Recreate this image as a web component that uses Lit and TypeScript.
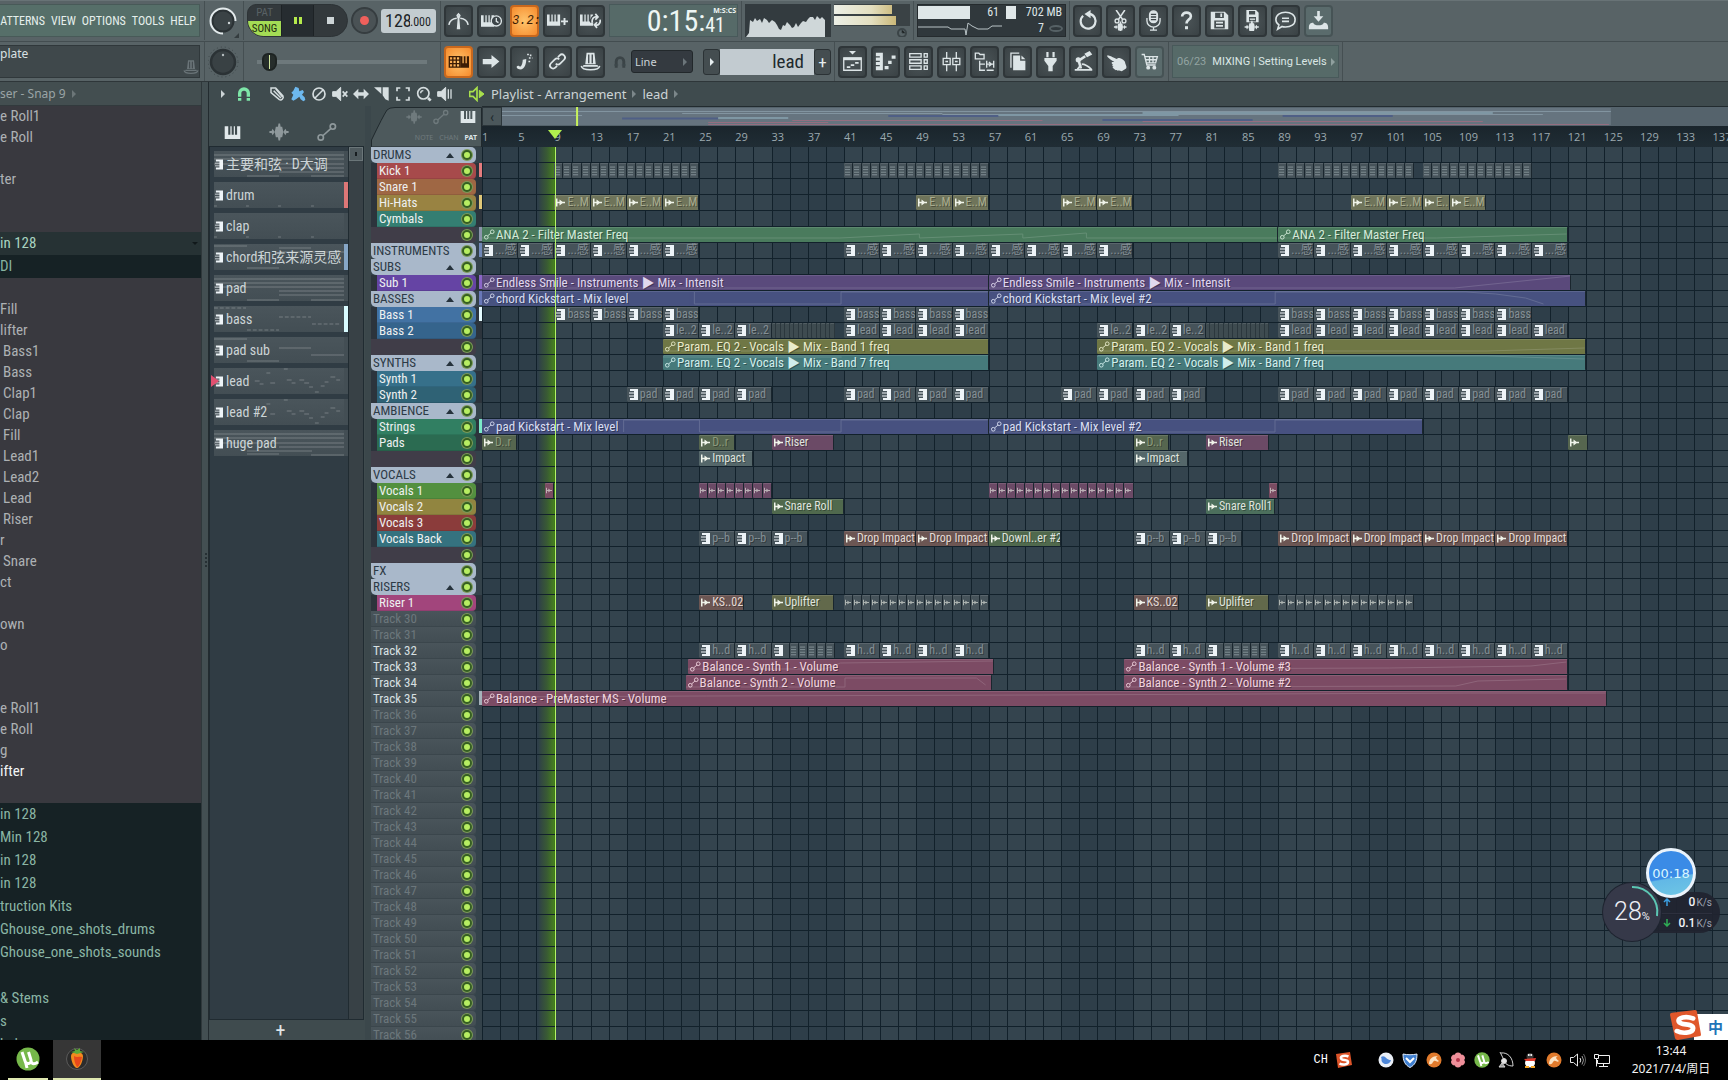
import { LitElement, html, svg, css, nothing } from "lit";
import { customElement, state } from "lit/decorators.js";
import { classMap } from "lit/directives/class-map.js";

const BARS = 137.7;
const pct = (bars: number) => `${(bars / BARS) * 100}%`;

/* ---------- icons, all on a 24 unit square ---------- */
const piano = (x = 0, y = 0) => svg`<path fill="currentColor" stroke="none" transform="translate(${x} ${y})" fill-rule="evenodd"
  d="M0 0h15v13H0zM3 0v8h2V0zM6.500 0v8h2V0zM10 0v8h2V0z"/>`;
const wave = (x: number, y: number, s = 1) => svg`<path fill="currentColor" stroke="none" transform="translate(${x} ${y}) scale(${s})"
  d="M0-1 2-1 3-3 5 0 6-5 8-5 8.500-8 10-8 10.500-5 12-5 13 0 15-3 16-1 18-1 18 1 16 1 15 3 13 0 12 5 10.500 5 10 8 8.500 8 8 5 6 5 5 0 3 3 2 1 0 1z"/>`;

const ICONS: Record<string, unknown> = {
  metro: svg`<path stroke-width="1.800" d="M1 17c1-5 4-7 9-7.500M23 17c-1-5-4-7-9-7.500"/><path fill="currentColor" stroke="none" d="M12 3l2.500 3-1.500 4 1 12h-4l1-12-1.500-4z"/><circle cx="12" cy="6.500" r="1" fill="#3d4549"/>`,
  wait: svg`${piano(0, 6)}<circle cx="17.500" cy="12.500" r="5.800" fill="#3d4549"/><path d="M17.500 9v4l2.500 1.500"/>`,
  keysplus: svg`${piano(0, 5)}<path stroke-width="2.200" d="M20 9v8M16 13h8"/>`,
  loop: svg`${piano(0, 5)}<path stroke="#3d4549" stroke-width="5" d="M14 14a4 5 0 0 1 5-6"/><path stroke-width="2" d="M14 14a4 5 0 0 1 5-6M23 11a4 5 0 0 1-5 6M17.500 4.500l3 3.500-3 3M19.500 14l-3 3 3 3.500"/>`,
  step: svg`<path d="M1.500 6.500h12v12h-12zM5.500 6.500v12M9.500 6.500v12M1.500 10.500h12M1.500 14.500h12"/><path fill="currentColor" stroke="none" d="M14 6h10v13H14zm2.500 0v8H18V6zm3.500 0v8h1.500V6z" fill-rule="evenodd"/>`,
  arrow: svg`<path fill="currentColor" stroke="none" d="M2 9h10V4.500l9 7.500-9 7.500V15H2z"/>`,
  glide: svg`<path fill="currentColor" stroke="none" d="M3 18c1-2 3-1 4 0 2-1 3-5 3-8l4-1c0 6-2 11-6 12-3 0-5-1-5-3z"/><path stroke-dasharray="2 1.500" stroke-width="1.800" d="M15 4h3M17 8h4M16.500 12h3M19 4v2"/>`,
  link: svg`<path stroke-width="2" d="M10 14.500a3.500 3.500 0 0 0 5 0l4.500-4.500a3.500 3.500 0 0 0-5-5l-2 2M14 9.500a3.500 3.500 0 0 0-5 0L4.500 14a3.500 3.500 0 0 0 5 5l2-2"/>`,
  stamp: svg`<path fill="currentColor" stroke="none" d="M7.500 2h9L18 15H6zM4 16h16l1 2H3z"/><path d="M10 4v10M14 4v10" stroke="#3d4549"/><path stroke-width="1.800" d="M1.500 17c1 6 20 6 21 0"/>`,
  magnet: svg`<path stroke-width="5" d="M5.500 22V11a6.500 6.500 0 0 1 13 0v11"/><path stroke="#3f4b4e" stroke-width="1.800" d="M2 17h7M15 17h7"/>`,
  playlist: svg`<path fill="currentColor" stroke="none" d="M8 0h8l-4 4z"/><path d="M2 8h20v14H2z"/><path stroke-width="3" d="M2 9h20"/><path stroke-width="2" d="M5.500 18.500h4M10 16h4M15 13.500h4"/>`,
  roll: svg`<path fill="currentColor" stroke="none" d="M1 2h8v20H1zm0 4v1.500h4.500V6zm0 5v1.500h4.500V11zm0 5v1.500h4.500V16z" fill-rule="evenodd"/><path stroke-width="3.500" d="M11 19h4.500M15 13h4M19 7h4.500"/>`,
  rack: svg`<path d="M2 3h13v4H2zM2 10h13v4H2zM2 17h13v4H2zM18.500 3H22v4h-3.500zM18.500 10H22v4h-3.500zM18.500 17H22v4h-3.500z"/>`,
  mixer: svg`<path d="M6.500 1v7.500M6.500 15.500V23M17.500 1v7.500M17.500 15.500V23M2.500 8.500h8v7h-8zM13.500 8.500h8v7h-8z"/><path d="M5 12h3M16 12h3"/>`,
  tree: svg`<path d="M1.500 2.500h4L7 4h4.500v5h-10zM6.500 11v11h6M6.500 15h6"/><path d="M14.500 11v8M22.500 11v8M14.500 15h8M14.500 22h8M17 12.500l3 2.500-3 2.500"/>`,
  files: svg`<path d="M4.500 19V2.500H14"/><path fill="currentColor" stroke="none" d="M7 5h8v6h6v11H7zM16.500 5l4.500 4.500h-4.500z"/>`,
  plug: svg`<path stroke-width="2.500" d="M8.500 1v6M15.500 1v6"/><path fill="currentColor" stroke="none" d="M5 8h14v3l-4.500 6v6h-5v-6L5 11z"/>`,
  bump: svg`<path fill="currentColor" stroke="none" d="M13 3l6-3 3 4-6 3z"/><path stroke-width="3" d="M14 6L6.500 11 9 20"/><path stroke-width="2" d="M2 21.500h20M10 15c4 0 8 3 11 6M5 21l4-5"/><circle cx="6" cy="10" r="2.200" fill="currentColor"/>`,
  hand: svg`<path fill="currentColor" stroke="none" d="M1 5.500C3 4 9 8 12 9l2-1c4 0 8 3 8 6 1 3 2 4 1 6l-5 3c-2-1-6 0-8-2l-2-1.500c-1-1 0-2 1-2-2 0-2.500-2-1-2.500-2 0-2-2.500-.500-2.500h2C7 11 2 8 1 5.500z"/>`,
  cart: svg`<path d="M3 4h3l3 12h10M7 6.500h14l-2 7H9M8 10h12M12 7v6M16 7v6"/><circle cx="10.500" cy="19" r="1.500" fill="currentColor"/><circle cx="17.500" cy="19" r="1.500" fill="currentColor"/>`,
  undo: svg`<path stroke-width="2.500" d="M7 6.500A8.500 8.500 0 1 0 14.500 4.500"/><path fill="currentColor" stroke="none" d="M15.500 0v9.500L8.500 4.500z"/>`,
  cut: svg`<path stroke-width="1.800" d="M7 0l7.500 11M17 0L9.500 11"/><circle cx="8" cy="12.500" r="2.200"/><circle cx="16" cy="12.500" r="2.200"/>${wave(4.5, 19.5, 0.8)}`,
  mic: svg`<rect x="7.500" y="1" width="9" height="13.500" rx="4.500" fill="currentColor"/><path d="M4.500 9v3.500a7.500 7 0 0 0 15 0V9M12 19v4M8 23h8"/><path stroke="#3d4549" d="M9 5h6M9 8h6M9 11h6"/>`,
  help: svg`<path stroke-width="3" d="M7 7.500c0-6 10-6 10-.500 0 4-5 4-5 8.500"/><path fill="currentColor" stroke="none" d="M10.300 18.500h3.400V22h-3.400z"/>`,
  save: svg`<path fill="currentColor" stroke="none" fill-rule="evenodd" d="M2 2h16l4 4v16H2zM7 3v6h10V3zM6 12v9h12v-9z"/><path stroke-width="2" d="M8 14.500h8M8 18h8M14 4v4"/>`,
  saveas: svg`<path fill="currentColor" stroke="none" fill-rule="evenodd" d="M5 0h11l3 3v11H5zM8 1v4h7V1zM8 8v5h8V8z"/><path d="M9 10.500h6"/>${wave(3, 19.5, 0.9)}`,
  chat: svg`<path stroke-width="1.800" d="M12 2.500c6 0 11 3 11 8.500s-5 8.500-11 8.500c-1.500 0-3 0-4-.600L3 22l1.500-5C2.500 15.500 1 13.500 1 11c0-5.500 5-8.500 11-8.500zM8 9.500h8M8 13h8"/>`,
  inbox: svg`<path fill="currentColor" stroke="none" d="M10.500 1h3v6h4L12 13.500 6.500 7h4z"/><path fill="currentColor" stroke="none" d="M1 20c0-4 2-5.500 5-5.500 1 4 11 4 12 0 3 0 5 1.500 5 5.500v2H1z"/>`,
  pencil: svg`<path stroke-width="2.200" d="M3 3l7 0 11 12c1.500 3-2 7-5.500 5.500L3 10zM7 7l11 11M10 4l10 12"/>`,
  paint: svg`<path fill="currentColor" stroke="none" d="M8 1l5 2 1 5 5-2 2 3-3 4 4 4 1 4-3 2-4-3-2-4-5 4-4 2-3-2 3-7-3-3 3-3z"/>`,
  none: svg`<circle cx="12" cy="12" r="9" stroke-width="2.500"/><path stroke-width="2.500" d="M6 18L18 6"/>`,
  mute: svg`<path fill="currentColor" d="M1 8.500h5l7-6.500v20l-7-6.500H1z"/><path stroke-width="2.500" d="M16 8l7 8M23 8l-7 8"/>`,
  slip: svg`<path fill="currentColor" stroke="none" d="M0 12l8-8v5.500h8V4l8 8-8 8v-5.500H8V20z"/>`,
  slice: svg`<path fill="currentColor" stroke="none" d="M0 2h11v10zM13 2h9v20l-5-2-4-6z"/>`,
  select: svg`<path stroke-width="2.500" d="M3 8V3h5M16 3h5v5M21 16v5h-5M8 21H3v-5"/>`,
  zoom: svg`<circle cx="11" cy="11" r="8.500" stroke-width="2.500"/><path stroke-width="4" d="M18 18l4 4"/><path stroke-width="2" d="M7 11a4 4 0 0 1 4-4"/>`,
  play: svg`<path fill="currentColor" d="M1 8.500h5l7-6.500v20l-7-6.500H1z"/><path stroke-width="2" d="M17 5v14M21 5v14"/>`,
  speaker: svg`<path stroke-width="2.500" d="M1 8.500h5l6-6v19l-6-6H1z"/><path fill="currentColor" d="M15.500 6.500l7 5.500-7 5.500z"/>`,
  piano: svg`<path fill="currentColor" stroke="none" fill-rule="evenodd" d="M1 3h22v18H1zM6 3v12h3V3zM10.800 3v12h3V3zM15.500 3v12h3V3z"/>`,
  wave: svg`${wave(0.5, 12, 1.28)}`,
  auto: svg`<circle cx="4.500" cy="18.500" r="3.200" stroke-width="2"/><circle cx="19" cy="5.500" r="3.200" stroke-width="2"/><path stroke-width="2" d="M7 16.500L16.500 8"/>`,
};
const icon = (name: string) => html`<svg class="ic" viewBox="0 0 24 24" fill="none" stroke="currentColor" stroke-width="1.500" aria-hidden="true">${ICONS[name]}</svg>`;

const patMark = html`<svg class="mk" viewBox="0 0 9 11" aria-hidden="true"><path fill="#eef4f8" d="M1 0h8v11H1V9h4V7.500H0V6.500h5V4.500H0V3.500h5V2H1z"/></svg>`;
const patMarkDim = html`<svg class="mk" viewBox="0 0 7 11" aria-hidden="true"><path stroke="#8e9aa0" fill="none" d="M0 1.500h6M0 4.500h6M0 7.500h6M0 10.500h6"/></svg>`;
const audMark = html`<svg class="mk" viewBox="0 0 9 11" aria-hidden="true"><path fill="#f0f4ea" d="M0 1.500h1.500v3.200H3.500V2.500L6.500 4.700H9v1.600H6.500L3.500 8.500V6.300H1.500v3.200H0z"/></svg>`;
const autMark = html`<svg class="mk wide" viewBox="0 0 12 11" fill="none" stroke="currentColor" aria-hidden="true"><circle cx="2.500" cy="8.500" r="2"/><circle cx="9" cy="2.500" r="2"/><path d="M4 7L7.500 4"/></svg>`;

/* ---------- song data ---------- */
type Track = { name: string; kind: "group" | "sub" | "blank" | "free" | "used"; color?: string; fold?: boolean; strip?: string };
const T = (name: string, kind: Track["kind"], color?: string, strip?: string, fold = false): Track => ({ name, kind, color, strip, fold });
const tracks: Track[] = [
  T("DRUMS", "group", undefined, undefined, true),
  T("Kick 1", "sub", "#a74a4b", "#e67c7e"),
  T("Snare 1", "sub", "#9f6744"),
  T("Hi-Hats", "sub", "#998342", "#e0c878"),
  T("Cymbals", "sub", "#347e72"),
  T("", "blank", undefined, "#8d95ac"),
  T("INSTRUMENTS", "group", undefined, "#7088b8"),
  T("SUBS", "group", undefined, undefined, true),
  T("Sub 1", "sub", "#6544a4", "#8b66c8"),
  T("BASSES", "group", undefined, "#6878b8", true),
  T("Bass 1", "sub", "#4272a3", "#e4fbff"),
  T("Bass 2", "sub", "#35648c"),
  T("", "blank"),
  T("SYNTHS", "group", undefined, undefined, true),
  T("Synth 1", "sub", "#36708a"),
  T("Synth 2", "sub", "#2f6275"),
  T("AMBIENCE", "group", undefined, undefined, true),
  T("Strings", "sub", "#317f62", "#7be8c8"),
  T("Pads", "sub", "#2b6b51"),
  T("", "blank"),
  T("VOCALS", "group", undefined, undefined, true),
  T("Vocals 1", "sub", "#53903f"),
  T("Vocals 2", "sub", "#918540"),
  T("Vocals 3", "sub", "#8b3c3b"),
  T("Vocals Back", "sub", "#35727f"),
  T("", "blank"),
  T("FX", "group"),
  T("RISERS", "group", undefined, undefined, true),
  T("Riser 1", "sub", "#a2457c"),
  ...Array.from({ length: 27 }, (_, i) => {
    const n = i + 30;
    return T(`Track ${n}`, n >= 32 && n <= 35 ? "used" : "free", undefined, n === 35 ? "#a5b2ba" : undefined);
  }),
];

type Clip = { s: number; e: number; t: string; k: "auto" | "pat" | "aud" | "mpat" | "maud" | "mbar"; c: string; line?: string };
const run = (k: Clip["k"], c: string, t: string, starts: number[], len = 4): Clip[] => starts.map((s) => ({ s, e: s + len, t, k, c }));
const seq = (a: number, b: number, step = 4) => Array.from({ length: Math.round((b - a) / step) }, (_, i) => a + i * step);
const A = (s: number, e: number, t: string, c: string, line?: string): Clip => ({ s, e, t, k: "auto", c, line });
const W = (s: number, e: number, t: string, c: string): Clip => ({ s, e, t, k: "aud", c });

const lanes: Record<number, Clip[]> = {
  1: run("mpat", "slate", "", [...seq(9, 25, 1), ...seq(41, 57, 1), ...seq(89, 104, 1), ...seq(105, 117, 1)], 1),
  3: [...run("aud", "khaki", "E..M", [9, 13, 17, 21, 49, 53, 65, 69, 97, 101]), W(105, 108, "E..", "khaki"), W(108, 112, "E..M", "khaki")],
  5: [A(1, 89, "ANA 2 - Filter Master Freq", "green", "0,11 45,11 55,7 55,11 68,7 68,11 76,6 76,11 100,11"), A(89, 121, "ANA 2 - Filter Master Freq", "green", "0,11 55,11 100,7")],
  6: run("pat", "slate", "...感", [...seq(1, 25), ...seq(41, 73), ...seq(89, 121)]),
  8: [A(1, 57, "Endless Smile - Instruments ▶ Mix - Intensit", "purple", "0,13 100,13"), A(57, 121.4, "Endless Smile - Instruments ▶ Mix - Intensit", "purple", "0,13 80,13 100,1")],
  9: [A(1, 57, "chord Kickstart - Mix level", "indigo", "42,1 42,13 71,13 71,1 100,1"), A(57, 123, "chord Kickstart - Mix level #2", "indigo", "0,13 48,13 48,1 80,1 85,3 90,7 93,13")],
  10: run("pat", "slate", "bass", [...seq(9, 25), ...seq(41, 57), ...seq(89, 117)]),
  11: [
    ...run("pat", "slate", "le..2", [21, 25, 29, 69, 73, 77]),
    ...run("mbar", "slate", "", [...seq(33, 40, 0.5), ...seq(81, 88, 0.5)], 0.5),
    ...run("pat", "slate", "lead", [...seq(41, 57), ...seq(89, 121)]),
  ],
  12: [A(21, 57, "Param. EQ 2 - Vocals ▶ Mix - Band 1 freq", "olive", "0,12 55,12 56,9"), A(69, 123, "Param. EQ 2 - Vocals ▶ Mix - Band 1 freq", "olive", "0,12 80,12 100,9")],
  13: [A(21, 57, "Param. EQ 2 - Vocals ▶ Mix - Band 7 freq", "teal", "0,2 55,2"), A(69, 123, "Param. EQ 2 - Vocals ▶ Mix - Band 7 freq", "teal", "0,1 80,1 100,4")],
  15: run("pat", "slate", "pad", [...seq(17, 33), ...seq(41, 57), ...seq(65, 81), ...seq(89, 121)]),
  17: [A(1, 57, "pad Kickstart - Mix level", "indigo", "28,13 28,1 43,1 43,13 71,13 71,1 100,1"), A(57, 105, "pad Kickstart - Mix level #2", "indigo", "0,13 66,13 66,1 100,1")],
  18: [W(1, 4.9, "D..r", "moss"), W(25, 29, "D..r", "moss"), W(33, 39.9, "Riser", "plum"), W(73, 76.9, "D..r", "moss"), W(81, 88, "Riser", "plum"), W(121, 123.2, "", "moss")],
  19: [W(25, 31, "Impact", "grey"), W(73, 79, "Impact", "grey")],
  21: [...run("maud", "rose", "", [8, 88], 1), ...run("maud", "plum", "", [...seq(25, 33, 1), ...seq(57, 73, 1)], 1)],
  22: [W(33, 41, "Snare Roll", "leaf"), W(81, 88.6, "Snare Roll1", "fern")],
  24: [
    ...run("pat", "slate", "p--b", [25, 29, 33, 73, 77, 81]),
    ...run("aud", "brown", "Drop Impact", [41, 49, 89, 97, 105, 113], 8),
    W(57, 65, "Downl..er #2", "leaf"),
  ],
  28: [W(25, 30, "KS..02", "brown"), W(33, 39.9, "Uplifter", "sand"), W(73, 78, "KS..02", "brown"), W(81, 88, "Uplifter", "sand"), ...run("maud", "slate", "", [...seq(41, 57, 1), ...seq(89, 104, 1)], 1)],
  31: [
    ...run("pat", "slate", "h..d", [25, 29, ...seq(41, 57), 73, 77, ...seq(89, 121)]),
    ...run("pat", "slate", "", [33, 81], 2),
    ...run("mpat", "slate", "", [...seq(35, 40, 1), ...seq(83, 88, 1)], 1),
  ],
  32: [A(23.8, 57.6, "Balance - Synth 1 - Volume", "wine", "0,10 45,10 50,4 100,2"), A(72, 121, "Balance - Synth 1 - Volume #3", "wine", "0,10 60,9 92,7 100,3")],
  33: [A(23.5, 57.4, "Balance - Synth 2 - Volume", "wine", "0,12 52,12 52,3 95,3 98,10"), A(72, 121, "Balance - Synth 2 - Volume #2", "wine", "0,12 75,11 80,6 100,4")],
  34: [A(1, 125.3, "Balance - PreMaster MS - Volume", "wine", "0,6 20,5 50,4 88,2 100,2")],
};

const patterns: { n: string; c?: string; sel?: boolean; d: string }[] = [
  { n: "主要和弦 · D大调", d: "M0 4h134M0 8h134M0 13h134M34 25h33M100 25h34M67 17h67M67 21h67" },
  { n: "drum", c: "#dd7777", d: "M0 24h3M33 24h3M66 24h3M100 24h3" },
  { n: "clap", d: "M0 24h3M33 24h3M66 24h3M100 24h3" },
  { n: "chord和弦来源灵感", c: "#86a6c6", d: "M0 2h34M67 4h33M34 24h33M67 8h67" },
  { n: "pad", d: "M0 4h134M0 8h134M0 12h134M34 25h33M100 25h34M67 16h67M67 20h67" },
  { n: "bass", c: "#d8fbff", d: "M0 2h4M6 2h4M12 2h4M18 2h4M24 2h4M30 2h3M34 24h4M40 24h4M46 24h4M52 24h4M58 24h4M64 24h3M67 11h4M73 11h4M79 11h4M85 11h4M91 11h4M97 11h3M101 18h4M107 18h4M113 18h4M119 18h4M125 18h4" },
  { n: "pad sub", d: "M0 2h34M34 24h33M67 11h33M100 18h34" },
  { n: "lead", sel: true, d: "M42 13h5M47 16h4M54 5h4M58 15h5M72 1h4M75 12h5M80 15h4M88 12h5M93 15h5M98 19h4M104 24h4M110 18h4M114 14h4M120 9h5M126 12h4" },
  { n: "lead #2", d: "M58 15h5M54 5h4M72 1h4M75 12h5M80 15h4M88 12h5M93 15h5M98 19h4M104 24h4M110 18h4M114 14h4M120 9h5M126 12h4" },
  { n: "huge pad", d: "M0 4h134M0 8h134M0 13h134M34 24h33M100 25h34M67 17h67M34 21h67" },
];

const files: [string, string][] = [
  ["e Roll1", ""], ["e Roll", ""], ["", ""], ["ter", ""], ["", ""], ["", ""],
  ["in 128", "head"], ["DI", "open"],
  ["", ""], ["Fill", ""], ["lifter", ""], ["Bass1", "in"], ["Bass", "in"], ["Clap1", "in"], ["Clap", "in"], ["Fill", "in"], ["Lead1", "in"],
  ["Lead2", "in"], ["Lead", "in"], ["Riser", "in"], ["r", ""], ["Snare", "in"], ["ct", ""], ["", ""], ["own", ""], ["o", ""], ["", ""],
  ["", ""], ["e Roll1", ""], ["e Roll", ""], ["g", ""], ["ifter", "hot"], ["", ""],
  ["in 128", "dir"], ["Min 128", "dir"], ["in 128", "dir"], ["in 128", "dir"], ["truction Kits", "dir"],
  ["Ghouse_one_shots_drums", "dir"], ["Ghouse_one_shots_sounds", "dir"], ["", "dir"], ["& Stems", "dir"], ["s", "dir"], ["bel", "dir"],
];

const base = css`
  :host { display: block; min-width: 0; font-family: "Roboto Condensed", "Liberation Sans Narrow", "Liberation Sans", "Noto Sans CJK SC", sans-serif; color: #d3dbde; }
  * { box-sizing: border-box; }
  button, input, select { font: inherit; color: inherit; background: none; border: 0; padding: 0; margin: 0; min-width: 0; }
  .ic { width: 22px; height: 22px; display: block; }
`;

@customElement("daw-toolbar")
class DawToolbar extends LitElement {
  static styles = [base, css`
    .bar { background: #586366; overflow: hidden; }
    .row { display: flex; height: 41px; border-top: 1px solid #687376; padding-bottom: 1px; }
    .row + .row { border-top: 1px solid #434d50; border-bottom: 1px solid #2e3639; padding-bottom: 0; }
    .sec { display: flex; align-items: center; flex: none; padding: 0 3px; gap: 4px; border-right: 1px solid #454f52; }
    .menu { width: 205px; padding: 0 4px 0 0; }
    .menu nav { flex: 1; height: 33px; background: #566f69; border: 1px solid #485a58; border-left: 0; display: flex; justify-content: flex-end; align-items: center; gap: 6px; padding-right: 3px; font-size: 12px; color: #e6efec; }
    .menu nav button { flex: none; }
    .hint { flex: 1; height: 33px; background: #3f484b; border: 1px solid #30383b; border-left: 0; display: flex; justify-content: space-between; padding: 1px 0 0; font: 12px/14px "Noto Sans", sans-serif; color: #d9e1e3; }
    .hint .ic { width: 16px; height: 16px; margin-top: 12px; color: #6a7478; }
    .knob { width: 39px; justify-content: center; }
    .knob svg { width: 32px; height: 34px; }
    .trans { width: 197px; gap: 3px; }
    .pill { display: grid; grid-template-columns: 33px 32px 34px; height: 33px; border-radius: 10px 18px 18px 18px; overflow: hidden; border: 1px solid #2d3336; background: #33393c; }
    .mode { display: grid; grid-template-rows: 1fr 1fr; font-size: 11px; text-align: center; }
    .mode button { color: #596164; }
    .mode .on { background: #a4dc55; color: #1c2a10; border-radius: 0 0 0 12px; }
    .pill > button { display: grid; place-items: center; border-left: 1px solid #1d2225; }
    .pause { background: #262c30; }
    .pause i { display: block; width: 8px; height: 7px; border: solid #b5ea4c; border-width: 0 3px; }
    .stop i { display: block; width: 7px; height: 7px; background: #cdd5d7; }
    .rec { width: 27px; height: 27px; border-radius: 50%; background: #4a5255; border: 2px solid #363d40; display: grid; place-items: center; }
    .rec i { width: 9px; height: 9px; border-radius: 50%; background: #f0605c; }
    .tempo { display: flex; align-items: center; width: 55px; height: 24px; border-radius: 3px; background: #c3ccd0; color: #1d2529; padding-left: 4px; font-size: 12px; }
    .tempo input { width: 25px; font-size: 18px; }
    .tempo span { padding-top: 3px; }
    .tb { width: 29px; height: 32px; flex: none; border: 2px solid #2f3639; border-radius: 4px; background: radial-gradient(#4b5457, #3a4245); display: grid; place-items: center; color: #dde5e7; }
    .tb.hot { background: radial-gradient(#ffc46c, #f68b2c); border-color: #c9681d; color: #3b1c05; }
    .tb.lit { background: #5a6b6c; border-color: #465355; }
    .tb .ic { width: 21px; height: 21px; }
    .lcd { font: italic 12px "Liberation Mono", monospace; }
    .btns { padding: 0 4px 0 3px; }
    .wide { border-right: 0; }
    .time { width: 129px; height: 33px; margin: 0 3px 0 0; border: 1px solid #48595a; background: #566a68; display: grid; grid-template-columns: 1fr auto 11px; grid-template-rows: 11px 21px; color: #eef6f4; font-size: 30px; line-height: 32px; justify-items: end; padding-right: 1px; }
    .time > span { grid-row: 1 / 3; }
    .time b { grid-column: 2 / 4; font: bold 7px/11px "Noto Sans", sans-serif; }
    .time small { grid-column: 2; font-size: 20px; line-height: 19px; }
    .timesec { padding: 0; }
    .vis { padding: 0 3px; gap: 3px; align-items: flex-start; }
    .vis svg { margin-top: 3px; display: block; }
    .cpu { padding: 0 3px; }
    .cpubox { width: 149px; height: 33px; background: #30383c; border: 1px solid #252b2e; display: grid; grid-template-columns: 84px 1fr; grid-template-rows: 1fr 1fr; font-size: 12px; color: #dfe6e8; line-height: 15px; }
    .cpubox div { display: flex; align-items: center; justify-content: flex-end; padding-right: 3px; }
    .cpubox .load i { width: 52px; height: 13px; background: #dfe7e8; margin-right: auto; }
    .cpubox .mem i { width: 10px; height: 13px; background: #dfe7e8; margin: 0 auto 0 4px; }
    .cpubox .poly { padding-right: 0; gap: 5px; }
    .poly i { width: 14px; height: 7px; border: 2px solid #566165; border-radius: 50%; margin-right: 2px; }
    input[type="range"] { appearance: none; width: 172px; height: 20px; margin: 0 10px; background: linear-gradient(#6e797c, #6e797c) 0 50% / 100% 4px no-repeat; }
    input[type="range"]::-webkit-slider-thumb { appearance: none; width: 15px; height: 18px; border-radius: 8px 8px 10px 10px; background: linear-gradient(90deg, #262d2b 5px, #d2e8a0 5px, #d2e8a0 6px, #262d2b 6px); border: 2px solid #1d2322; }
    .snapsec { padding: 0 3px 0 4px; gap: 4px; }
    .snapsec > .ic { width: 14px; height: 14px; color: #3b4447; flex: none; }
    .sel { position: relative; width: 62px; height: 23px; border: 1px solid #22282b; border-radius: 3px; background: #343a40; display: flex; align-items: center; color: #ccd4d8; }
    .sel select { appearance: none; width: 100%; height: 100%; padding-left: 3px; font: 11px "Noto Sans", sans-serif; }
    .sel::after { content: ""; position: absolute; right: 5px; border: 4px solid transparent; border-left-color: #6b757a; border-right: 0; pointer-events: none; }
    .patsel { display: flex; align-items: stretch; height: 26px; margin-left: 6px; }
    .patsel button { width: 17px; border: 1px solid #2b3235; border-radius: 3px; background: #444d50; font-size: 17px; line-height: 20px; color: #e6eef0; }
    .patsel .tri::before { content: ""; display: block; margin: 0 0 0 6px; border: 4px solid transparent; border-left-color: #e6eef0; border-right: 0; width: 0; }
    .patsel input { width: 94px; background: #c2cbd0; color: #20292d; text-align: right; padding-right: 10px; font-size: 19px; }
    .newssec { padding: 0 3px; }
    .news { width: 167px; height: 33px; border: 1px solid #48595a; background: #566a68; display: flex; align-items: center; gap: 6px; padding-left: 4px; font: 11px Roboto, "Noto Sans", sans-serif; color: #dbe7e5; white-space: nowrap; text-decoration: none; }
    .news span { color: #93a4a2; }
    .news i { border: 4px solid transparent; border-left-color: #8fa09e; border-right: 0; margin-left: -2px; }
  `];

  private tb(name: string, label: string, cls = "") {
    return html`<button class="tb ${cls}" aria-label=${label}>${name === "lcd" ? html`<span class="lcd">3.2:</span>` : icon(name)}</button>`;
  }

  render() {
    return html`<header class="bar">
      <div class="row">
        <div class="sec menu"><nav>${["ATTERNS", "VIEW", "OPTIONS", "TOOLS", "HELP"].map((m) => html`<button>${m}</button>`)}</nav></div>
        <div class="sec knob"><svg viewBox="0 0 32 34" fill="none" aria-hidden="true"><circle cx="15" cy="17" r="10.500" fill="#3a4245" stroke="#2b3235" stroke-width="2"/><path stroke="#e3eaec" stroke-width="2" d="M15 29.500a12.500 12.500 0 1 1 12.500-12.500"/><circle cx="21" cy="19" r="1.200" fill="#cfd6d8"/><path fill="#343c3f" d="M31 29v5h-5z"/></svg></div>
        <div class="sec trans">
          <div class="pill"><div class="mode"><button>PAT</button><button class="on">SONG</button></div>
            <button class="pause" aria-label="Pause"><i></i></button><button class="stop" aria-label="Stop"><i></i></button></div>
          <button class="rec" aria-label="Record"><i></i></button>
          <label class="tempo"><input aria-label="Tempo" .value=${"128"} /><span>.000</span></label>
        </div>
        <div class="sec btns wide">${this.tb("metro", "Metronome")}${this.tb("wait", "Wait for input")}${this.tb("lcd", "Countdown", "hot")}${this.tb("keysplus", "Blend notes")}${this.tb("loop", "Loop recording")}</div>
        <div class="sec timesec"><div class="time"><span>0:15:</span><b>M:S:CS</b><small>41</small></div></div>
        <div class="sec vis">
          <svg width="86" height="33" viewBox="0 0 86 33" aria-hidden="true"><path fill="#333b3f" d="M0 0h86v33H0z"/><path fill="#cfd7d9" d="M1 33l3-4 1-13 3 2 2-4 2 3 3-2 2 4 2-5 3 2 2 3 3-3 3 2 2 3 2 4 2 1 2-5 2 1 2-4 3 3 2 3 2-1 2-4 2 4 3-4 2-2 3 1 2-3 2-2 3 0 2 3 2-4 3 3 2-2 3 3V33z"/></svg>
          <svg width="76" height="33" viewBox="0 0 76 33" aria-hidden="true"><path fill="#3a4245" d="M0 0h76v22H0z"/><defs><linearGradient id="pk"><stop stop-color="#ecefe6"/><stop offset=".6" stop-color="#e4dfc0"/><stop offset="1" stop-color="#cbb878"/></linearGradient></defs><path fill="url(#pk)" d="M0 1h58v9H0zM0 12h62v9H0z"/><circle cx="68" cy="29" r="4" fill="none" stroke="#3b4447" stroke-width="2"/><path stroke="#3b4447" d="M68 26v3h3"/></svg>
        </div>
        <div class="sec cpu"><div class="cpubox"><div class="load"><i></i>61</div><div class="mem"><i></i>702 MB</div>
          <svg width="84" height="15" viewBox="0 0 84 15" fill="none" stroke="#b9c3c6" aria-hidden="true"><path d="M0 6h30l3 2h14l1 6 2-12 4 3 6 3h10l4-3h10"/></svg><div class="poly">7<i></i></div></div></div>
        <div class="sec btns wide">${this.tb("undo", "Undo")}${this.tb("cut", "Cut")}${this.tb("mic", "Record audio")}${this.tb("help", "Help")}${this.tb("save", "Save")}${this.tb("saveas", "Export")}${this.tb("chat", "Messages")}${this.tb("inbox", "Download", "lit")}</div>
      </div>
      <div class="row">
        <div class="sec menu"><div class="hint">plate${icon("stamp")}</div></div>
        <div class="sec knob"><svg viewBox="0 0 32 34" fill="none" aria-hidden="true"><circle cx="15" cy="17" r="15" stroke="#3d4649" stroke-dasharray="1 3"/><circle cx="15" cy="17" r="12" fill="#394144" stroke="#2b3235" stroke-width="2.500"/><circle cx="15" cy="10" r="1.200" fill="#b6bec0"/></svg></div>
        <div class="sec trans"><input type="range" aria-label="Song position" min="0" max="100" .value=${"3"} /></div>
        <div class="sec btns wide">${this.tb("step", "Typing keyboard", "hot")}${this.tb("arrow", "Next")}${this.tb("glide", "Glide")}${this.tb("link", "Link")}${this.tb("stamp", "Stamp")}</div>
        <div class="sec snapsec">${icon("magnet")}
          <div class="sel"><select aria-label="Snap"><option>Line</option></select></div>
          <div class="patsel"><button class="tri" aria-label="Pattern menu"></button><input aria-label="Pattern" .value=${"lead"} /><button aria-label="New pattern">+</button></div></div>
        <div class="sec btns">${this.tb("playlist", "Playlist")}${this.tb("roll", "Piano roll")}${this.tb("rack", "Channel rack")}${this.tb("mixer", "Mixer")}${this.tb("tree", "Browser")}${this.tb("files", "Project")}${this.tb("plug", "Plugins")}${this.tb("bump", "Tempo tap")}${this.tb("hand", "Touch")}${this.tb("cart", "Shop", "lit")}</div>
        <div class="sec newssec"><a class="news" href="#"><span>06/23</span>MIXING | Setting Levels<i></i></a></div>
      </div>
    </header>`;
  }
}

@customElement("daw-browser")
class DawBrowser extends LitElement {
  static styles = [base, css`
    :host { display: flex; flex-direction: column; background: #39393f; overflow: hidden; }
    .title { height: 24px; flex: none; background: #434e50; border-bottom: 1px solid #323a3d; font: 12px/22px "Noto Sans", sans-serif; color: #9aa4a6; display: flex; align-items: center; gap: 6px; }
    .title i { border: 4px solid transparent; border-left-color: #6c7678; border-right: 0; }
    ul { margin: 0; padding: 0; list-style: none; }
    li { height: 21px; font-size: 15px; line-height: 21px; color: #adb1b4; white-space: nowrap; display: flex; justify-content: space-between; align-items: center; }
    .in { padding-left: 3px; }
    .head, .open, .dir { height: 23px; line-height: 23px; }
    .head { background: #263234; color: #a8d4c0; }
    .head::after { content: ""; border: 3px solid transparent; border-top-color: #10181a; border-bottom: 0; margin-right: 3px; }
    .open { background: #162225; color: #86b3a0; }
    .dir { background: #162225; color: #8ab5a4; }
    .hot { color: #f2f5f5; }
  `];
  render() {
    return html`<div class="title">ser - Snap 9<i></i></div><ul>${files.map(([n, c]) => html`<li class=${c}>${n}</li>`)}</ul>`;
  }
}

@customElement("daw-picker")
class DawPicker extends LitElement {
  static styles = [base, css`
    :host { display: flex; flex-direction: column; min-height: 0; }
    .tabs { height: 40px; flex: none; display: flex; align-items: center; padding: 12px 0 0 15px; gap: 28px; color: #8e989b; }
    .tabs .ic { width: 20px; height: 20px; }
    .tabs .on .ic { color: #e2e9eb; width: 17px; height: 17px; }
    .body { flex: 1; min-height: 0; display: grid; grid-template-columns: minmax(0, 1fr) 15px; border: 1px solid #202b31; background: #303c44; margin-right: 1px; }
    ul { margin: 0; padding: 4px 0 0 4px; list-style: none; display: flex; flex-direction: column; gap: 5px; }
    li { position: relative; }
    li button { display: flex; align-items: center; gap: 3px; width: 100%; height: 26px; padding-left: 1px; background: linear-gradient(#4a555b, #434e54); border-right: 4px solid #434e54; font-size: 14px; line-height: 18px; color: #ccd4d6; white-space: nowrap; position: relative; overflow: hidden; }
    li svg.notes { position: absolute; inset: 0; width: 100%; height: 26px; opacity: .12; }
    .mk { width: 8px; height: 11px; flex: none; }
    .cur { position: absolute; left: -3px; top: 7px; border: 6px solid transparent; border-left: 8px solid #e05070; border-right: 0; z-index: 1; }
    .bar { border-left: 1px solid #202b31; background: #384146; }
    .bar i { display: block; height: 14px; background: #4f5a5e; border: 1px solid #6b7679; }
    .bar i::before { content: ""; display: block; width: 2px; height: 4px; margin: 4px auto; background: #171d20; }
    .add { height: 20px; flex: none; font-size: 20px; line-height: 18px; color: #e0e6e8; padding-right: 13px; }
  `];
  render() {
    return html`<div class="tabs"><button class="on" aria-label="Patterns">${icon("piano")}</button><button aria-label="Audio">${icon("wave")}</button><button aria-label="Automation">${icon("auto")}</button></div>
      <div class="body"><ul>${patterns.map((p) => html`<li>${p.sel ? html`<span class="cur"></span>` : nothing}
        <button style=${p.c ? `border-right-color:${p.c}` : nothing}><svg class="notes" viewBox="0 0 134 26" preserveAspectRatio="none" stroke="#fff" stroke-width="2" aria-hidden="true"><path d=${p.d}/></svg>${patMark}${p.n}</button></li>`)}</ul><div class="bar"><i></i></div></div>
      <button class="add" aria-label="Add pattern">+</button>`;
  }
}

@customElement("daw-playlist")
class DawPlaylist extends LitElement {
  static styles = [base, css`
    :host { display: grid; grid-template-columns: 111px 1fr; grid-template-rows: 41px 1fr; min-height: 0; overflow: hidden; }
    .corner { position: relative; display: flex; flex-direction: column; align-items: flex-end; padding: 3px 5px 0 0; color: #6f7a7d; }
    .corner > svg { position: absolute; inset: 0; width: 111px; height: 41px; }
    .kinds { position: relative; display: flex; gap: 9px; }
    .kinds .ic { width: 18px; height: 16px; }
    .kinds .on { color: #dfe7e9; }
    .names { position: relative; display: flex; gap: 6px; font: 7px/8px "Noto Sans", sans-serif; margin-top: 9px; }
    .names b { color: #dfe7e9; }
    .top { display: grid; grid-template-rows: 20px 21px; min-width: 0; overflow: hidden; }
    .ov { display: flex; border-top: 1px solid #222b2f; }
    .ov button { width: 20px; background: #4b575b; border: 1px solid #2c363b; color: #20292d; font-size: 15px; line-height: 14px; flex: none; }
    .ov svg { flex: 1; height: 19px; min-width: 0; }
    .ruler { background: linear-gradient(#1a252c, #202d35); display: flex; position: relative; font: 11px/21px "Open Sans", "Noto Sans", sans-serif; color: #9ca9af; }
    .ruler span { flex: none; white-space: nowrap; }
    .ptr { position: absolute; top: 4px; margin-left: -6px; border: 7px solid transparent; border-top: 9px solid #b0f04e; border-bottom: 0; }
    .heads { min-height: 0; overflow: hidden; }
    .h { display: flex; height: 16px; background: #34424a; }
    .hb { position: relative; flex: none; width: 105px; height: 16px; display: flex; align-items: center; justify-content: space-between; padding: 0 4px 0 2px; font-size: 13px; line-height: 16px; white-space: nowrap; border-radius: 0 4px 4px 0; }
    .group .hb { background: #a9b8ca; color: #2d3a46; border-radius: 0 5px 5px 5px; }
    .sub { background: #2c343c; }
    .sub .hb { margin-left: 6px; width: 99px; color: #eef0f0; box-shadow: inset 0 -1px #00000018; }
    .blank .hb { background: #403d48; }
    .free .hb, .used .hb { background: linear-gradient(#49545a, #424d53); box-shadow: inset 0 -1px #3b464c; }
    .free .hb { color: #6c777c; }
    .used .hb { color: #d8e0e2; }
    .strip { width: 3px; margin-left: auto; height: 14px; }
    .end { display: flex; align-items: center; gap: 8px; }
    .fold { border: 4px solid transparent; border-bottom: 5px solid #26323c; border-top: 0; }
    .led { width: 10px; height: 10px; border-radius: 50%; background: #b7ee62; border: 2px solid #365f22; box-shadow: 0 0 0 1px #7c9a58; }
    .canvas { position: relative; min-width: 0; overflow: hidden; background: #2e3e49; }
    .cols { position: absolute; inset: 0; display: flex; }
    .cols i { flex: none; border-left: 1px solid #12212b; }
    .cols i.lt { background: #34444e; }
    .lane { position: relative; height: 16px; border-bottom: 1px solid #12212b; }
    .clip { position: absolute; top: 0; height: 15px; overflow: hidden; display: flex; align-items: center; padding-left: 2px; gap: 1px; font-size: 13px; line-height: 15px; white-space: nowrap; border-right: 1px solid #1a262e; box-shadow: inset 0 1px #ffffff1c; border-radius: 1px; text-shadow: 1px 1px #00000050; }
    .clip .mk { width: 9px; height: 11px; flex: none; }
    .clip .wide { width: 11px; }
    .clip .line { position: absolute; inset: 0; width: 100%; height: 100%; opacity: .14; }
    .slate { background: #46535a; color: #848f95; }
    .pat, .aud { gap: 2px; font-size: 12px; }
    .mpat, .maud, .mbar { padding-left: 1px; }
    .mbar { background: #3e4b50; border-color: #2b373d; }
    .mpat .mk, .maud .mk { width: 6px; }
    .maud .mk { opacity: .6; }
    .aud { color: #dfe3dd; }
    .green { background: #4a7b5d; color: #d3ead9; }
    .purple { background: #5a4a7c; color: #e0d8ee; }
    .indigo { background: #475280; color: #d9def2; }
    .olive { background: #6f7745; color: #e8ebcb; }
    .teal { background: #467a7b; color: #d1eeec; }
    .wine { background: #7c4b64; color: #f0d3de; }
    .khaki { background: #6f745a; color: #a8ac90; }
    .moss { background: #56664f; color: #8b9a7c; }
    .plum { background: #6b4a66; }
    .rose { background: #7b4c62; }
    .grey { background: #55676a; }
    .leaf { background: #50694d; }
    .fern { background: #4c6f5c; }
    .brown { background: #6c5653; color: #e4dbd6; }
    .sand { background: #62694b; }
    .glow, .head { position: absolute; top: 0; bottom: 0; pointer-events: none; }
    .glow { width: 18px; margin-left: -17px; background: linear-gradient(90deg, #4c8a1000, #4c8a1060 50%, #4f9a10d0); }
    .head { width: 1px; background: #b4f26a; }
  `];

  private clip(c: Clip) {
    const mark = c.k === "auto" ? autMark : c.k === "pat" ? patMark : c.k === "mpat" ? patMarkDim : c.k === "mbar" ? nothing : audMark;
    return html`<div class="clip ${c.k} ${c.c}" style="left:${pct(c.s - 1)};width:${pct(c.e - c.s)}">
      ${c.line ? html`<svg class="line" viewBox="0 0 100 15" preserveAspectRatio="none" fill="none" stroke="#fff" aria-hidden="true"><polyline vector-effect="non-scaling-stroke" points=${c.line}/></svg>` : nothing}${mark}${c.t}</div>`;
  }

  render() {
    const cols = Array.from({ length: 69 }, (_, i) => i);
    return html`<div class="corner"><svg viewBox="0 0 111 41" aria-hidden="true"><path fill="#4d595c" stroke="#20292d" d="M.500 41V34Q12 10 16 4 18 1.500 24 1.500H110.500V41z"/></svg>
        <div class="kinds">${icon("wave")}${icon("auto")}<span class="on">${icon("piano")}</span></div>
        <div class="names"><span>NOTE</span><span>CHAN</span><b>PAT</b></div></div>
      <div class="top">
        <div class="ov"><button aria-label="Scroll left">‹</button>
          <svg viewBox="0 0 1225 19" preserveAspectRatio="none" aria-hidden="true"><path fill="#55636c" d="M0 0h1225v19H0z"/><path fill="#66747f" d="M0 1h1108v17H0z"/>
            <path stroke="#8294a0" d="M0 4.500h1108M0 8.500h80M180 6.500h260M440 7.500h600"/><path stroke="#4f5f86" stroke-width="2" d="M120 11.500h96M386 9h110M600 13h150M780 9h110"/><path stroke="#7f97a4" stroke-width="2" d="M216 11h70M496 8h180M640 6h350"/><path stroke="#946e80" d="M206 15.500h120M290 13.500h250M640 14.500h340M206 17.500h900"/>
            <path fill="#c7f25c" d="M74 0h2v19h-2z"/></svg></div>
        <div class="ruler">${seq(1, 141).map((b) => html`<span style="width:${pct(4)}">${b}</span>`)}<i class="ptr" style="left:${pct(8)}"></i></div>
      </div>
      <div class="heads">${tracks.map((t) => html`<div class="h ${t.kind}"><div class="hb" style=${t.color ? `background:${t.color}` : nothing}><span>${t.name}</span><span class="end">${t.fold ? html`<i class="fold"></i>` : nothing}<button class="led" aria-label="Mute track"></button></span></div>
        ${t.strip ? html`<i class="strip" style="background:${t.strip}"></i>` : nothing}</div>`)}</div>
      <div class="canvas"><div class="cols">${cols.map((i) => html`<i class=${classMap({ lt: Math.floor(i / 4) % 2 === 1 })} style="width:${pct(2)}"></i>`)}</div>
        <div class="glow" style="left:${pct(8.1)}"></div>
        ${tracks.map((_, i) => html`<div class="lane">${(lanes[i] ?? []).map((c) => this.clip(c))}</div>`)}
        <div class="head" style="left:${pct(8.1)}"></div></div>`;
  }
}

@customElement("desk-taskbar")
class DeskTaskbar extends LitElement {
  static styles = [base, css`
    :host { display: flex; height: 40px; background: #000; align-items: center; padding-left: 8px; gap: 5px; }
    .app { width: 40px; height: 40px; display: grid; place-items: center; border-bottom: 2px solid #dfe8b0; }
    .act { width: 48px; background: #363636; }
    .app svg { width: 24px; height: 24px; }
    .tray { margin-left: auto; display: flex; align-items: center; gap: 8px; }
    .tray svg { width: 16px; height: 16px; }
    .lang { font: 12px "Liberation Mono", monospace; color: #fff; }
    .gap { width: 10px; }
    .clock { width: 110px; padding-right: 4px; text-align: center; font: 12px/18px "Noto Sans", "Noto Sans CJK SC", sans-serif; color: #f2f2f2; }
  `];
  render() {
    const ball = (a: string, b: string, d: string) => html`<svg viewBox="0 0 16 16" aria-hidden="true"><circle cx="8" cy="8" r="7.500" fill=${a}/><path fill=${b} d=${d}/></svg>`;
    const fox = ball("#e07a2c", "#fbe3c4", "M3 12c0-5 3-8 9-8-3 1-2 3 1 5-2 2-3-1-5 0s-1 4-5 3z");
    const ut = html`<svg viewBox="0 0 24 24" fill="none" aria-hidden="true"><circle cx="12" cy="12" r="11.500" fill="#76b84a"/><path stroke="#fff" stroke-width="3" d="M6 5l3 9c1 4 7 3 6-1L12.500 5M15 14c1 4 4 3 7 1M9.500 15l1.500 6"/></svg>`;
    return html`<button class="app" aria-label="Torrent">${ut}</button>
      <button class="app act" aria-label="Music studio"><svg viewBox="0 0 24 24" aria-hidden="true"><circle cx="12" cy="12" r="10.500" fill="#2c2c2c" stroke="#5a5a5a"/><path fill="#f38a1e" d="M6 9c0-4 5-4 6-3 3-1 6 0 6 3 0 5-3 12-6 12S6 14 6 9z"/><path fill="#e8481c" d="M9 9c3 2 6 0 8 1-1 5-3 10-5 10-2-3-3-7-3-11z"/><path fill="#5fa83a" d="M12 7L6 5l4-1-1-3 3 2 3-2v3l4 1z"/></svg></button>
      <div class="tray"><span class="lang">CH</span>
        <svg viewBox="0 0 16 16" aria-hidden="true"><path fill="#dd5429" d="M0 2l14-2 2 13-14 3z"/><path fill="none" stroke="#fff" stroke-width="2.500" d="M12.500 4.500C9 3 4 4 5 6.500s7 .500 7 3.500-6 3-8.500 1.500"/></svg><span class="gap"></span>
        ${ball("#e9eef6", "#4d86d8", "M3 5c4-3 5 3 10 3-1 5-7 5-9 2-1-2 0-3-1-5z")}
        <svg viewBox="0 0 16 16" aria-hidden="true"><path fill="#3f7fd0" stroke="#dfeaf8" d="M1 2c5 1 9 1 14 0 0 7-2 11-7 13.500C3 13 1 9 1 2z"/><path fill="none" stroke="#fff" stroke-width="2" d="M4 6l4 4 4-4"/></svg>
        ${fox}
        <svg viewBox="0 0 16 16" aria-hidden="true">${[0, 60, 120, 180, 240, 300].map((a) => svg`<circle cx="8" cy="3.800" r="3.200" fill="#ef8f9a" transform="rotate(${a} 8 8)"/>`)}<circle cx="8" cy="8" r="2" fill="#b5344a"/></svg>
        ${ut}
        <svg viewBox="0 0 16 16" fill="none" stroke="#d5d5d5" aria-hidden="true"><path d="M2 0l4 8M3 1c7-1 12 5 12 13-5 0-8-2-9-6"/><circle cx="6" cy="9" r="2.500" fill="#e4e4e4"/><path d="M4 11l-3 4h6z" fill="#9a9a9a"/></svg>
        <svg viewBox="0 0 16 16" aria-hidden="true"><ellipse cx="8" cy="11" rx="5" ry="4.500" fill="#fff"/><circle cx="8" cy="4.500" r="3.500" fill="#3a3a3a"/><path fill="#e33a2c" d="M2 7l12-1-1 3H4z"/><circle cx="6.800" cy="3" r="1" fill="#fff"/><circle cx="9.200" cy="3" r="1" fill="#fff"/><path fill="#f5a623" d="M3 14h4v2H3zM9 14h4v2H9z"/></svg>
        ${fox}
        <svg viewBox="0 0 16 16" fill="none" stroke="#e8e8e8" aria-hidden="true"><path d="M.500 5.500h3l4-3.500v12l-4-3.500h-3zM10 6q1.500 2 0 4.500"/><path stroke="#9a9a9a" d="M12 4q3 4 0 8.500"/><path stroke="#666" d="M13.500 2q4 6 0 12"/></svg>
        <svg viewBox="0 0 16 16" fill="none" stroke="#f0f0f0" aria-hidden="true"><path d="M4.500 3.500h11v8H3.500V8M9.500 12v2.500M5 14.500h9M.500 2.500h4v4h-4zM2.500 6.500v8"/></svg>
        <div class="clock">13:44<br />2021/7/4/周日</div></div>`;
  }
}

@customElement("desk-widgets")
class DeskWidgets extends LitElement {
  static styles = [base, css`
    :host { position: absolute; inset: 0; pointer-events: none; font-family: Roboto, "Noto Sans", sans-serif; }
    .net { position: absolute; right: 8px; top: 892px; width: 84px; height: 41px; border-radius: 8px 21px 21px 8px; background: #20232fee; display: grid; grid-template-rows: 1fr 1fr; padding-right: 8px; }
    .net div { display: grid; grid-template-columns: 35px 1fr auto; align-items: center; font-size: 12px; font-weight: 500; color: #f2f4f8; text-align: right; }
    .net div + div { border-top: 1px solid #2d303e; }
    .net small { font-size: 10px; font-weight: 400; color: #9fa4b2; margin-left: 1px; }
    .up { color: #3b9ee0; } .dn { color: #2fae55; }
    .net svg { width: 8px; height: 8px; justify-self: end; }
    .cpu { position: absolute; right: 67px; top: 883px; width: 58px; height: 58px; border-radius: 50%; background: #363949; box-shadow: 0 0 0 1px #1e2430; display: flex; align-items: baseline; justify-content: center; padding-top: 14px; font-size: 25px; font-weight: 300; color: #eef0f6; }
    .cpu small { font-size: 11px; font-weight: 400; }
    .cpu svg { position: absolute; inset: 0; }
    .timer { position: absolute; right: 32px; top: 848px; width: 50px; height: 50px; border-radius: 50%; border: 3px solid #eaf3fb; background: linear-gradient(170deg, #3a8be6 58%, #62b8e6 61%, #6ec6e4); display: grid; place-items: center; font: 13px "DejaVu Sans", sans-serif; color: #d9f6ff; }
    .ime { position: absolute; right: 0; top: 1014px; height: 26px; width: 34px; background: #fff; color: #1f74b8; font: bold 15px/26px "Noto Sans CJK SC", sans-serif; padding-left: 14px; }
    .ime svg { position: absolute; left: -25px; top: -4px; width: 34px; height: 30px; }
  `];
  render() {
    return html`<div class="net"><div><svg class="up" viewBox="0 0 8 8" fill="none" stroke="currentColor" stroke-width="1.500" aria-hidden="true"><path d="M4 8V1M1 4l3-3 3 3"/></svg><span>0</span><small>K/s</small></div><div><svg class="dn" viewBox="0 0 8 8" fill="none" stroke="currentColor" stroke-width="1.500" aria-hidden="true"><path d="M4 0v7M1 4l3 3 3-3"/></svg><span>0.1</span><small>K/s</small></div></div>
      <div class="cpu"><svg viewBox="0 0 58 58" fill="none" stroke="#5cc7b4" stroke-width="2" aria-hidden="true"><path d="M29 4a25 25 0 0 1 25 29"/></svg>28<small>%</small></div>
      <div class="timer">00:18</div>
      <div class="ime"><svg viewBox="0 0 34 32" preserveAspectRatio="none" aria-hidden="true"><path fill="#e0572b" d="M1 5q0-2 2-2L26 0q2 0 2 2l4 24q0 2-2 2L9 32q-2 0-3-2z"/><path fill="none" stroke="#fff" stroke-width="5" stroke-linecap="round" d="M24 9C17 6 8 8 10 12.500s14 1 14 7-12 5.500-16 3"/></svg>中</div>`;
  }
}

@customElement("app-root")
class AppRoot extends LitElement {
  static styles = [base, css`
    .app { position: relative; height: 100vh; display: grid; grid-template-rows: auto minmax(0, 1fr) auto; overflow: hidden; background: #3f4b4e; }
    .work { display: grid; grid-template-columns: 201px 8px minmax(0, 1fr); min-height: 0; }
    .split { background: #434f52; border-left: 1px solid #2f383b; border-right: 1px solid #232c30; display: flex; align-items: center; }
    .split i { width: 2px; height: 16px; margin-left: 3px; background: repeating-linear-gradient(#263034 0 2px, transparent 2px 4px); }
    .win { display: grid; grid-template-rows: 24px minmax(0, 1fr); min-width: 0; min-height: 0; }
    .bar { display: flex; align-items: center; padding-left: 12px; gap: 5px; font: 13px/20px "Noto Sans", sans-serif; color: #ccd4d6; white-space: nowrap; padding-bottom: 1px; }
    .bar .ic { width: 16px; height: 16px; }
    .bar button { color: #d6dee0; }
    .tri { border: 4px solid transparent; border-left-color: #7c878a; border-right: 0; margin: 0 1px; }
    .tri.first { border-left-color: #ccd4d6; margin: 0 6px 0 0; }
    .bar .snap { color: #7ee6a8; margin-right: 12px; }
    .bar .paint { color: #6db8ee; }
    .bar .spk { color: #a8e04c; margin: 0 1px 0 11px; }
    .main { display: grid; grid-template-columns: 156px 6px minmax(0, 1fr); min-height: 0; }
    .gut { background: #3b474b; }
  `];
  @state() private tool = "paint";
  render() {
    const tools = ["pencil", "paint", "none", "mute", "slip", "slice", "select", "zoom", "play"];
    return html`<div class="app"><daw-toolbar></daw-toolbar>
      <div class="work"><daw-browser></daw-browser><div class="split"><i></i></div>
        <section class="win"><div class="bar"><i class="tri first"></i><button class="snap" aria-label="Snap">${icon("magnet")}</button>
          ${tools.map((t) => html`<button class=${classMap({ paint: t === this.tool })} aria-label=${t} @click=${() => (this.tool = t)}>${icon(t)}</button>`)}
          <button class="spk" aria-label="Preview">${icon("speaker")}</button><span>Playlist - Arrangement</span><i class="tri"></i><span>lead</span><i class="tri"></i></div>
          <div class="main"><daw-picker></daw-picker><div class="gut"></div><daw-playlist></daw-playlist></div></section></div>
      <desk-taskbar></desk-taskbar><desk-widgets></desk-widgets></div>`;
  }
}
